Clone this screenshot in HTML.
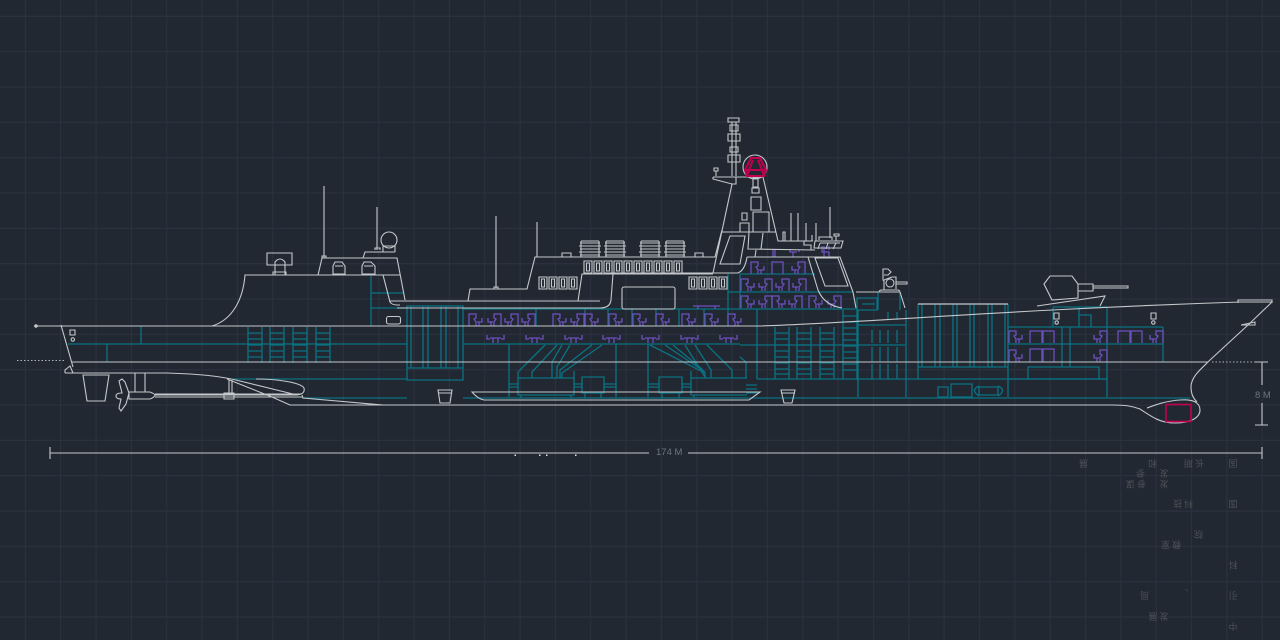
<!DOCTYPE html>
<html><head><meta charset="utf-8"><style>
html,body{margin:0;padding:0;background:#212831;width:1280px;height:640px;overflow:hidden}
svg{display:block}
.w{fill:none;stroke:#c4c8cc;stroke-width:1.1}
.t{fill:none;stroke:#0b7283;stroke-width:1.3}
.p{fill:none;stroke:#6c50bd;stroke-width:1.3}
.k{fill:none;stroke:#c2004f;stroke-width:1.6}
text{font-family:"Liberation Sans","Noto Sans CJK SC",sans-serif}
</style></head><body>
<svg width="1280" height="640" viewBox="0 0 1280 640" xmlns="http://www.w3.org/2000/svg">
<defs>
<g id="sr"><path d="M0 13V1H7V5L5 6L7 9V13M8 9H13V5M10 9V13"/></g>
<g id="sl" transform="translate(14,0) scale(-1,1)"><path d="M0 13V1H7V5L5 6L7 9V13M8 9H13V5M10 9V13"/></g>
<g id="tb"><path d="M1 0V4H4M18 0V4H15M4 3H15M7 3V8M12 3V8"/></g>
<g id="lad"><path d="M0 0V36M14 0V36M0 6H14M0 12H14M0 18H14M0 24H14M0 30H14"/></g>
<g id="lad2"><path d="M0 0V52M14 0V52M0 6H14M0 12H14M0 18H14M0 24H14M0 30H14M0 36H14M0 42H14M0 47H14"/></g>
<g id="win"><path d="M0 0H8V12H0ZM2.500 2V10H5.500V2Z"/></g>
<g id="vent"><path d="M0 2H20M-1 5H21M0 8H20M-1 11H21M0 14H20M1 0V16M19 0V16M1 0H19"/></g>
</defs>
<rect width="1280" height="640" fill="#212831"/>
<path fill="none" stroke="#2b303e" stroke-width="1.3" d="M25.300 0V640M60.600 0V640M96 0V640M131.300 0V640M166.700 0V640M202 0V640M237.300 0V640M272.700 0V640M308 0V640M343.400 0V640M378.700 0V640M414 0V640M449.400 0V640M484.700 0V640M520.100 0V640M555.400 0V640M590.700 0V640M626.100 0V640M661.400 0V640M696.800 0V640M732.100 0V640M767.400 0V640M802.800 0V640M838.100 0V640M873.500 0V640M908.800 0V640M944.100 0V640M979.500 0V640M1014.800 0V640M1050.200 0V640M1085.500 0V640M1120.800 0V640M1156.200 0V640M1191.500 0V640M1226.900 0V640M1262.200 0V640M0 16.300H1280M0 51.600H1280M0 87H1280M0 122.300H1280M0 157.700H1280M0 193H1280M0 228.300H1280M0 263.700H1280M0 299H1280M0 334.400H1280M0 369.700H1280M0 405H1280M0 440.400H1280M0 475.700H1280M0 511.100H1280M0 546.400H1280M0 581.700H1280M0 617.100H1280"/>

<!-- teal interior -->
<g class="t">
<path d="M68 344H407M141 326V344M107 344V362M233 379H407M302 398H407"/>
<use href="#lad" x="248" y="327"/><use href="#lad" x="270" y="327"/><use href="#lad" x="293" y="327"/><use href="#lad" x="316" y="327"/>
<path d="M371 276V326M371 293H403M371 308H407"/>
<path d="M407 306H463V380H407ZM411 306V368M423 306V368M428 306V368M441 306V368M446 306V368M458 306V368M407 368H463"/>
<path d="M463 309H740M463 344H740M536 309V326M585 309V326M608 309V326M632 309V326M656 309V326M679 309V326M704 309V326M728 309V326"/>
<path d="M463 398H1190"/>
<path d="M509 344V397M616 344V397M648 344V397M509 384H518M509 387H518M574 384H582M574 387H582M604 384H616M604 387H616M648 384H659M648 387H659M682 384H691M682 387H691"/>
<path d="M518 371V395H574V371M518 378H574M582 377H604V393H582ZM585 393V398M601 393V398M521 395V398M571 395V398"/>
<path d="M545 345L519 371M557 345L532 372V378M562 345L552 362V378M570 345L557 367V378M592 345L560 370V378M602 345L562 373V378"/>
<path d="M659 377H682V393H659ZM662 393V398M679 393V398M691 371V395H747M691 378H747M694 395V398"/>
<path d="M650 345L705 373V378M665 345L705 372M673 345L703 370M685 345L705 377M695 345L711 370V378M707 345L732 370V378"/>
<path d="M746 378V362L740 357M746 385H757M746 389H757M746 393H757"/>
<path d="M728 274V309M740 274V309M728 292H853M740 274H815M740 309H858"/>
<path d="M757 309V379M740 345H905M757 379H1107M858 310V397M906 310V397"/>
<use href="#lad2" x="775" y="327"/><use href="#lad2" x="797" y="327"/><use href="#lad2" x="820" y="327"/>
<path d="M843 310V379M857 310V379M843 316H857M843 322H857M843 328H857M843 334H857M843 340H857M843 346H857M843 352H857M843 358H857M843 364H857M843 370H857"/>
<path d="M857 298H877V310H857ZM862 304H875M878 292V310M900 292V310"/>
<path d="M872 330V343M880 330V343M888 330V343M897 330V343M872 347V362M880 347V362M888 347V362M897 347V362M872 364V379M880 364V379M888 364V379M897 364V379M888 312V320M897 312V320M858 325H906"/>
<path d="M918 304V379M1008 304V397M922 304V367M935 304V367M940 304V367M953 304V367M957 304V367M970 304V367M974 304V367M988 304V367M992 304V367M1005 304V367M918 367H1008"/>
<path d="M938 387H948V397H938ZM951 384H972V397H951ZM979 387H998V395H979ZM979 386Q970 390 979 396M998 386Q1007 390 998 396"/>
<path d="M1008 327H1163M1008 344H1163M1163 327V362M1062 327V367M1070 327V367M1062 367H1070M1028 367H1099V379H1028ZM1008 379H1107M1107 307V397M1053 307V327M1053 307H1107M1079 307V327M1079 315H1091V327"/>
</g>

<!-- purple -->
<g class="p">
<use href="#sr" x="469" y="313"/><use href="#sl" x="487" y="313"/><use href="#sl" x="504" y="313"/><use href="#sl" x="521" y="313"/>
<use href="#sr" x="553" y="313"/><use href="#sl" x="570" y="313"/><use href="#sr" x="585" y="313"/><use href="#sr" x="609" y="313"/><use href="#sr" x="633" y="313"/><use href="#sr" x="656" y="313"/><use href="#sr" x="682" y="313"/><use href="#sr" x="705" y="313"/><use href="#sr" x="728" y="313"/>
<use href="#tb" x="486" y="335"/><use href="#tb" x="525" y="335"/><use href="#tb" x="564" y="335"/><use href="#tb" x="602" y="335"/><use href="#tb" x="641" y="335"/><use href="#tb" x="680" y="335"/><use href="#tb" x="719" y="335"/>
<path d="M693 306H720M698 306V309M715 306V309"/>
<use href="#sr" x="741" y="278"/><use href="#sl" x="758" y="278"/><use href="#sl" x="775" y="278"/><use href="#sl" x="792" y="278"/>
<use href="#sr" x="741" y="295"/><use href="#sl" x="758" y="295"/><use href="#sr" x="772" y="295"/><use href="#sl" x="788" y="295"/><use href="#sr" x="809" y="295"/><use href="#sl" x="827" y="295"/>
<use href="#sr" x="751" y="261"/><path d="M772 274V262H783V274"/><use href="#sl" x="791" y="261"/>
<path d="M773 249V257M775 249V257M790 249V252H797M793 252V257M799 252V250M822 246V252H829V257M824 246V257M829 246V250"/>
<use href="#sr" x="1009" y="330"/><use href="#sr" x="1009" y="349"/>
<path d="M1030 343V331H1042V343M1043 343V331H1054V343M1030 362V349H1042V362M1043 362V349H1054V362M1118 343V331H1130V343M1131 343V331H1142V343"/>
<use href="#sl" x="1093" y="330"/><use href="#sl" x="1093" y="349"/><use href="#sl" x="1149" y="330"/>
</g>

<!-- white outlines -->
<g class="w">
<!-- hull -->
<path d="M34 326H760C880 322 1000 310 1240 302H1272"/>
<path d="M61 325L73 367"/>
<path d="M72 362H1208"/>
<path d="M65 373H167C200 374 220 376 240 381L297 395"/>
<path d="M65 373L65 370L70 366L73 373"/>
<path d="M227 379L272 397L290 405H1113C1125 405 1132 406 1140 409C1152 417 1160 423 1175 423C1190 423 1200 418 1200 410C1200 402 1192 399 1180 400C1165 401 1155 405 1147 408"/>
<path d="M256 379C275 379 300 382 304 388C305 392 303 394 297 395H155M302 395L303 398L383 405"/>
<path d="M1272 302L1248 325L1210 360C1200 370 1192 376 1191 386C1191 394 1193 398 1197 402"/>
<path d="M1238 303V300H1272V303M1241 325L1255 322V325Z"/>
<circle cx="36" cy="326" r="1.2" fill="#c4c8cc"/>
<!-- stern windows -->
<path d="M70 330H75V335H70Z"/><circle cx="72.800" cy="339.500" r="1.700"/>
<path d="M1054 313H1059V319H1054Z"/><circle cx="1056.700" cy="322.500" r="1.700"/>
<path d="M1151 313H1156V319H1151Z"/><circle cx="1153.300" cy="322.500" r="1.700"/>
<!-- rudder prop -->
<path d="M83 375H109L105 401H87Z"/>
<path d="M135 373V392M145 373V392M129 392H150Q155 394 155 395Q155 397 150 399H129Z M155 394H302M155 397H302"/>
<path d="M229 380V393M232 380V393M224 393H234V399H224Z"/>
<path d="M129 393L125 382L122 379L119 381L122 393Q116 393 116 396Q116 399 121 399L119 408L121 411L126 404Z"/>
<!-- aft superstructure -->
<path d="M212 326C232 320 243 300 245 275H400M267 253H292V265H267ZM275 275V262Q280 256 285 262V275M273 275V272H286V275"/>
<path d="M324 186V258M322 258V256H326V258M377 207V250M375 250V248H380V250"/>
<path d="M318 275L322 258H363L365 252H395M383 252V246H395V252M363 258H397L405 300"/>
<circle cx="389" cy="240" r="8"/>
<path d="M333 274V266L335 262H342L345 266V274ZM362 274V266L364 262H371L375 266V274ZM335 266H343M364 266H373"/>
<rect x="386.500" y="316.500" width="14" height="7.500" rx="2"/>
<path d="M383 275L390 302Q392 305 397 305H400"/>
<path d="M389 301H600M397 308H600Q610 308 611 300L613 274"/>
<!-- mid deck -->
<path d="M468 301L470 289H527L535 257H715L722 230M496 216V288M537 222V257M494 289V287H498V289"/>
<path d="M578 301L582 274H713"/>
<rect x="622" y="287" width="53" height="22" rx="2"/>
<use href="#vent" x="580" y="241"/><use href="#vent" x="605" y="241"/><use href="#vent" x="640" y="241"/><use href="#vent" x="665" y="241"/>
<use href="#win" x="584" y="261"/><use href="#win" x="594" y="261"/><use href="#win" x="604" y="261"/><use href="#win" x="614" y="261"/><use href="#win" x="624" y="261"/><use href="#win" x="634" y="261"/><use href="#win" x="644" y="261"/><use href="#win" x="654" y="261"/><use href="#win" x="664" y="261"/><use href="#win" x="674" y="261"/>
<use href="#win" x="539" y="277"/><use href="#win" x="549" y="277"/><use href="#win" x="559" y="277"/><use href="#win" x="569" y="277"/>
<use href="#win" x="689" y="277"/><use href="#win" x="699" y="277"/><use href="#win" x="709" y="277"/><use href="#win" x="719" y="277"/>
<path d="M562 257V253H571V257M695 257V253H703V257"/>
<!-- boat, buckets -->
<path d="M472 392H760L749 400H484Q478 399 472 392Z"/>
<path d="M438 390H452L450 403H440ZM438 393H452M781 390H795L792 403H784ZM781 393H795"/>
<!-- tower -->
<path d="M728 118H739V122H728ZM730 125H738V131H730ZM728 134H740V141H728ZM730 147H738V152H730ZM728 155H740V162H728ZM732 122V176M736 122V176"/>
<circle cx="755" cy="167" r="12"/>
<path d="M713 177H763L778 241H813M713 177V179L732 184H736V177M716 176V171M714 168H718V171H714ZM732 184L713 273"/>
<path d="M722 232H776M730 236H745L740 264H720Z"/>
<path d="M753 178H758V187H753ZM752 188H759V193H752ZM751 197H761V210H751ZM742 213H747V220H742ZM753 212H769V232H753ZM740 223H749V232H740Z"/>
<path d="M749 232L748 249L815 250M763 233L761 249M756 250L755 257"/>
<path d="M791 213V241M798 213V241M806 223V241M816 223V241M830 207V238M783 232H785V241H783ZM812 235V241M804 241V245H811V250"/>
<path d="M815 241H843L841 248H814ZM819 240V237H832V240M836 241V236M834 234H839V236H834ZM820 243L818 249M828 243L826 249M836 243L833 249M820 243H840"/>
<path d="M747 257H840L853 292L856 308M747 257Q745 270 738 273L713 273H610M808 257L818 290Q824 305 842 308M815 258H838L848 286H825Z"/>
<path d="M856 292H900L905 308"/>
<!-- CIWS -->
<path d="M879 291L881 290H898L900 291M884 290V281L883 280V269H888L891 272L888 275H884M884 280L892 277H896V289M896 282H907V284H896"/>
<circle cx="890" cy="283" r="4"/>
<!-- turret -->
<path d="M1044 284L1050 276H1072L1078 284V298L1052 300L1044 284ZM1078 284H1093V291H1078ZM1093 286H1128V288H1093ZM1037 306L1105 296L1100 306"/>
<!-- big white edges -->
<path d="M918 304H1008" stroke-width="1.300"/>
<!-- dimensions -->
<path d="M50 453H649M688 453H1262M50 447V459M1262 447V459"/>
<path d="M1262 362V385M1262 403V425M1255 362H1268M1255 425H1268"/>
</g>
<path d="M17 360.500H65M1212 362H1262" fill="none" stroke="#aeb3b8" stroke-dasharray="1.500 2" stroke-width="1"/>
<g fill="#dfe2e5"><rect x="514.500" y="454.500" width="1.500" height="1.500"/><rect x="539" y="454.500" width="1.500" height="1.500"/><rect x="546" y="454.500" width="1.500" height="1.500"/><rect x="575" y="454.500" width="1.500" height="1.500"/></g>

<!-- pink -->
<g class="k">
<path d="M751 158H760L766 170L764 176H747L745 170ZM753 160L749 170H762L758 160M745 170H766M747 176L749 170M764 176L762 170" stroke-width="2"/>
<rect x="1166" y="404.500" width="25" height="17"/>
</g>

<text x="656" y="455" font-size="9.500" fill="#6f757e">174 M</text>
<text x="1255" y="398" font-size="9.500" fill="#6f757e">8 M</text>

<!-- faint rotated text -->
<g font-size="9" fill="#4d5159" text-anchor="middle">
<text transform="rotate(180 1233 463.500)" x="1233" y="467">国</text>
<text transform="rotate(180 1193 463.500)" x="1193" y="467" letter-spacing="2">长期</text>
<text transform="rotate(180 1152.500 463.500)" x="1152.500" y="467">和</text>
<text transform="rotate(180 1083.500 463.500)" x="1083.500" y="467">展</text>
<text transform="rotate(180 1164 473.500)" x="1164" y="477">发</text>
<text transform="rotate(180 1140.500 473.500)" x="1140.500" y="477">参</text>
<text transform="rotate(180 1164 484)" x="1164" y="487.500">发</text>
<text transform="rotate(180 1135 484)" x="1135" y="487.500" letter-spacing="2">参谋</text>
<text transform="rotate(180 1233 504)" x="1233" y="507.500">国</text>
<text transform="rotate(180 1182 504)" x="1182" y="507.500" letter-spacing="2">科技</text>
<text transform="rotate(180 1198.500 534.500)" x="1198.500" y="538">院</text>
<text transform="rotate(180 1170 545)" x="1170" y="548.500" letter-spacing="2">教室</text>
<text transform="rotate(180 1233 565)" x="1233" y="568.500">科</text>
<text transform="rotate(180 1233 595.500)" x="1233" y="599">引</text>
<text transform="rotate(180 1184 593)" x="1184" y="596.500">、</text>
<text transform="rotate(180 1144.500 595.500)" x="1144.500" y="599">局</text>
<text transform="rotate(180 1233 626.500)" x="1233" y="630">中</text>
<text transform="rotate(180 1157.500 616.500)" x="1157.500" y="620" letter-spacing="2">发展</text>
</g>
</svg>
</body></html>
